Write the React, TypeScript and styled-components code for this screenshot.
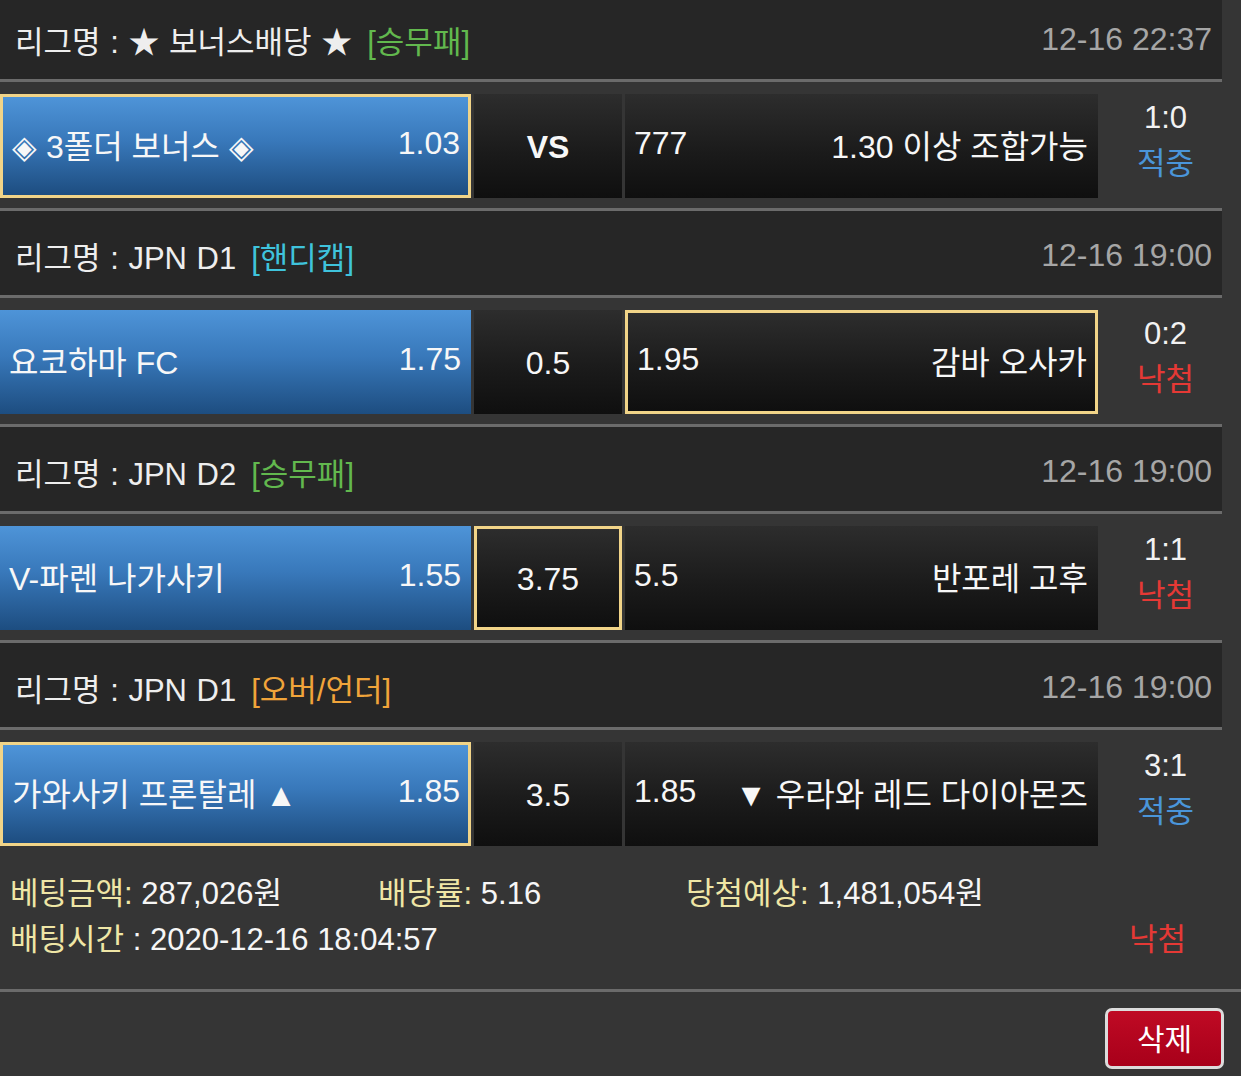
import React from "react";
import styled, { createGlobalStyle, css } from "styled-components";

const Global = createGlobalStyle`
  html, body { margin: 0; padding: 0; background: #353535; }
  body { font-family: "Liberation Sans", "Noto Sans CJK KR", sans-serif; color: #f2f2f2; }
`;

const Page = styled.div`
  width: 1241px;
  min-height: 1076px;
  background: #353535;
  overflow: hidden;
`;

const List = styled.div`
  width: 1222px;
`;

const Header = styled.div<{ $first?: boolean }>`
  height: ${(p) => (p.$first ? 79 : 84)}px;
  background: #262626;
  display: flex;
  align-items: center;
  justify-content: space-between;
  padding: ${(p) => (p.$first ? "0 10px 0 15px" : "4px 10px 0 15px")};
  box-sizing: border-box;
  font-size: 31px;
`;

const League = styled.div`
  color: #eeeeee;
  display: flex;
  align-items: center;
  word-spacing: 1px;
`;

const tagColors: Record<string, string> = {
  green: "#62b84e",
  cyan: "#3fc3dc",
  orange: "#f0a43a",
};

const Tag = styled.span<{ $tone: string }>`
  color: ${(p) => tagColors[p.$tone]};
  margin-left: 15px;
`;

const Time = styled.div`
  color: #a6a6a6;
  font-size: 32px;
`;

const Rule = styled.div<{ $full?: boolean }>`
  height: 3px;
  background: #6b6b6b;
  width: ${(p) => (p.$full ? "1241px" : "100%")};
`;

const MatchRow = styled.div`
  display: grid;
  grid-template-columns: 471px 148px 473px 1fr;
  column-gap: 3px;
  padding: 12px 0 10px;
  height: 126px;
  box-sizing: border-box;
`;

const selectedCss = css`
  border: 3px solid #f1d488;
`;

const TeamCell = styled.div<{ $selected?: boolean }>`
  box-sizing: border-box;
  display: flex;
  align-items: center;
  justify-content: space-between;
  font-size: 32px;
  color: #f7f7f7;
  padding: 0 ${(p) => (p.$selected ? 8 : 10)}px 5px 9px;
  white-space: nowrap;
  ${(p) => p.$selected && selectedCss}
`;

const HomeCell = styled(TeamCell)`
  background: linear-gradient(to bottom, #4e94d8 0%, #3878ba 45%, #1d4d80 100%);
`;

const AwayCell = styled(TeamCell)`
  background: linear-gradient(to bottom, #2d2d2d 0%, #1b1b1b 55%, #0f0f0f 100%);
`;

const MidCell = styled.div<{ $selected?: boolean; $bold?: boolean }>`
  box-sizing: border-box;
  display: flex;
  align-items: center;
  justify-content: center;
  padding-top: 3px;
  background: linear-gradient(to bottom, #2d2d2d 0%, #1b1b1b 55%, #0f0f0f 100%);
  font-size: 32px;
  font-weight: ${(p) => (p.$bold ? 700 : 400)};
  color: #f7f7f7;
  ${(p) => p.$selected && selectedCss}
`;

const Score = styled.div`
  display: flex;
  flex-direction: column;
  align-items: center;
  justify-content: center;
  padding: 0 0 10px 8px;
  font-size: 31px;
  line-height: 46px;
  color: #f2f2f2;
`;

const resultColors: Record<string, string> = {
  win: "#4a95da",
  lose: "#e53935",
};

const Result = styled.span<{ $r: string }>`
  color: ${(p) => resultColors[p.$r]};
`;

const Footer = styled.div`
  padding: 15px 55px 26px 10px;
  font-size: 31px;
  line-height: 46px;
`;

const FooterRow = styled.div`
  display: grid;
  grid-template-columns: 368px 308px 1fr;
`;

const FooterRow2 = styled.div`
  display: flex;
  justify-content: space-between;
`;

const Label = styled.span`
  color: #efe6a6;
`;

const Value = styled.span`
  color: #f6f6f6;
`;

const Actions = styled.div`
  display: flex;
  justify-content: flex-end;
  padding: 16px 17px 0 0;
`;

const DeleteButton = styled.button`
  width: 119px;
  height: 61px;
  box-sizing: border-box;
  border: 3px solid #dcdcdc;
  border-radius: 7px;
  background: linear-gradient(to bottom, #bf0a24, #a8001a);
  color: #ffffff;
  font-family: "Liberation Sans", "Noto Sans CJK KR", sans-serif;
  font-size: 30px;
  padding: 0 0 4px;
  cursor: pointer;
`;

type Bet = {
  league: string;
  tag: string;
  tone: string;
  time: string;
  home: string;
  homeOdd: string;
  mid: string;
  awayOdd: string;
  away: string;
  pick: "home" | "mid" | "away";
  score: string;
  result: "win" | "lose";
  bold?: boolean;
};

const bets: Bet[] = [
  {
    league: "리그명 : ★ 보너스배당 ★",
    tag: "[승무패]",
    tone: "green",
    time: "12-16 22:37",
    home: "◈ 3폴더 보너스 ◈",
    homeOdd: "1.03",
    mid: "VS",
    awayOdd: "777",
    away: "1.30 이상 조합가능",
    pick: "home",
    score: "1:0",
    result: "win",
    bold: true,
  },
  {
    league: "리그명 : JPN D1",
    tag: "[핸디캡]",
    tone: "cyan",
    time: "12-16 19:00",
    home: "요코하마 FC",
    homeOdd: "1.75",
    mid: "0.5",
    awayOdd: "1.95",
    away: "감바 오사카",
    pick: "away",
    score: "0:2",
    result: "lose",
  },
  {
    league: "리그명 : JPN D2",
    tag: "[승무패]",
    tone: "green",
    time: "12-16 19:00",
    home: "V-파렌 나가사키",
    homeOdd: "1.55",
    mid: "3.75",
    awayOdd: "5.5",
    away: "반포레 고후",
    pick: "mid",
    score: "1:1",
    result: "lose",
  },
  {
    league: "리그명 : JPN D1",
    tag: "[오버/언더]",
    tone: "orange",
    time: "12-16 19:00",
    home: "가와사키 프론탈레 ▲",
    homeOdd: "1.85",
    mid: "3.5",
    awayOdd: "1.85",
    away: "▼ 우라와 레드 다이아몬즈",
    pick: "home",
    score: "3:1",
    result: "win",
  },
];

const resultText = { win: "적중", lose: "낙첨" };

export default function App() {
  return (
    <Page>
      <Global />
      <List>
        {bets.map((b, i) => (
          <React.Fragment key={i}>
            <Header $first={i === 0}>
              <League>
                {b.league}
                <Tag $tone={b.tone}>{b.tag}</Tag>
              </League>
              <Time>{b.time}</Time>
            </Header>
            <Rule />
            <MatchRow>
              <HomeCell $selected={b.pick === "home"}>
                <span>{b.home}</span>
                <span>{b.homeOdd}</span>
              </HomeCell>
              <MidCell $selected={b.pick === "mid"} $bold={b.bold}>
                {b.mid}
              </MidCell>
              <AwayCell $selected={b.pick === "away"}>
                <span>{b.awayOdd}</span>
                <span>{b.away}</span>
              </AwayCell>
              <Score>
                <span>{b.score}</span>
                <Result $r={b.result}>{resultText[b.result]}</Result>
              </Score>
            </MatchRow>
            {i < bets.length - 1 && <Rule />}
          </React.Fragment>
        ))}
      </List>
      <Footer>
        <FooterRow>
          <span>
            <Label>베팅금액:</Label> <Value>287,026원</Value>
          </span>
          <span>
            <Label>배당률:</Label> <Value>5.16</Value>
          </span>
          <span>
            <Label>당첨예상:</Label> <Value>1,481,054원</Value>
          </span>
        </FooterRow>
        <FooterRow2>
          <span>
            <Label>배팅시간</Label> <Value>: 2020-12-16 18:04:57</Value>
          </span>
          <Result $r="lose">낙첨</Result>
        </FooterRow2>
      </Footer>
      <Rule $full />
      <Actions>
        <DeleteButton>삭제</DeleteButton>
      </Actions>
    </Page>
  );
}
